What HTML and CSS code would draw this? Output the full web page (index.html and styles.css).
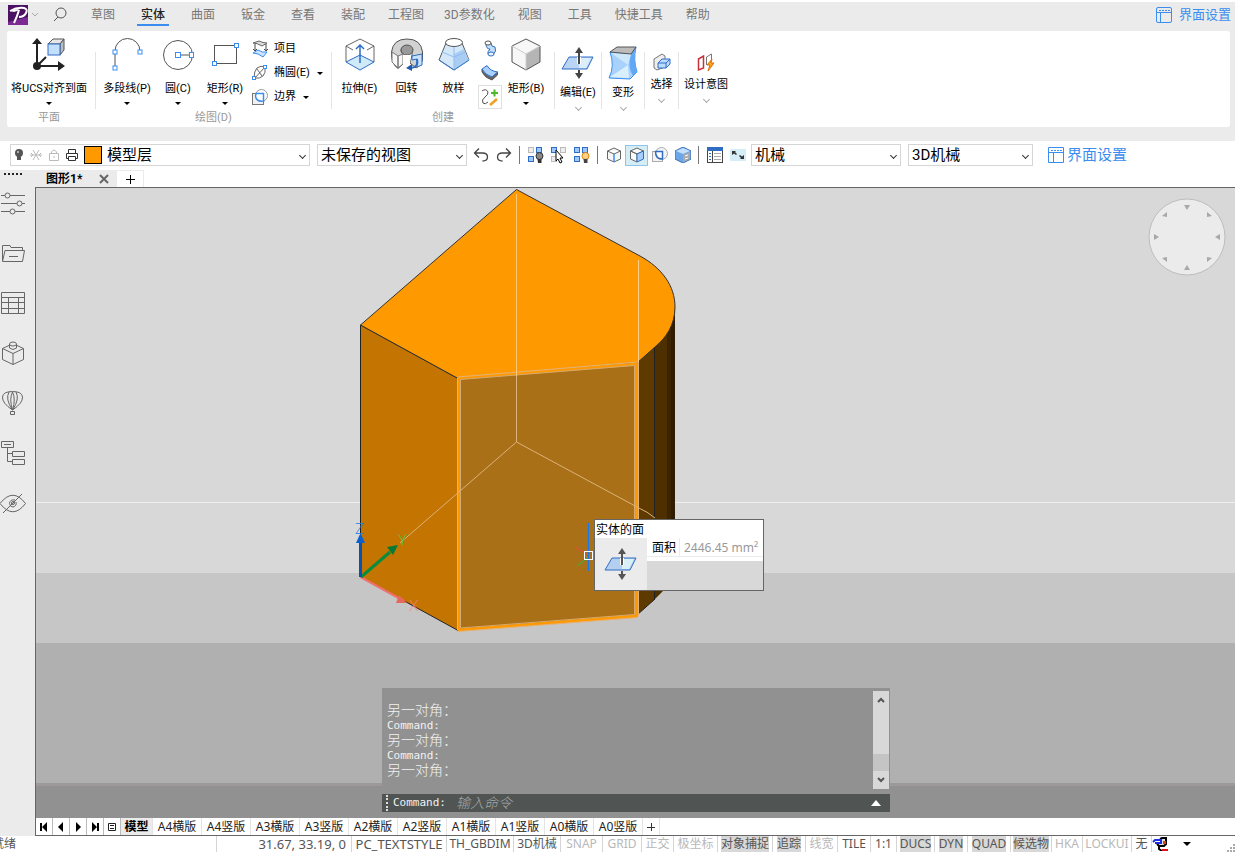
FILE: index.html
```
<!DOCTYPE html>
<html lang="zh-CN">
<head>
    <meta charset="UTF-8">
    <meta name="viewport" content="width=device-width, initial-scale=1.0">
    <title>图形1</title>
    <link rel="stylesheet" href="styles.css">
</head>
<body>

<!-- Menu bar -->
<header class="menubar">
    <button class="logo" aria-label="应用菜单">
        <svg width="20" height="20" viewBox="0 0 20 20"><rect width="20" height="20" fill="#4b1263"/><path d="M0 17 L20 12 V20 H0Z" fill="#7a2a92"/><path d="M2 6 Q9 2 16 3 Q20 4 18 8 Q16 12 11 12 M11 5 Q9 12 6 18" fill="none" stroke="#fff" stroke-width="2"/><path d="M2 6 L9 4 L12 5 L6 7Z" fill="#fff"/></svg>
        <svg width="8" height="6" viewBox="0 0 8 6"><path d="M1 1 L4 4 L7 1" fill="none" stroke="#aaa"/></svg>
    </button>
    <button class="search" aria-label="搜索">
        <svg width="14" height="16" viewBox="0 0 14 16"><circle cx="8" cy="6" r="5" fill="none" stroke="#555"/><path d="M5 10 L1 14" stroke="#555" fill="none"/></svg>
    </button>
    <nav class="tabs">
        <a href="#">草图</a>
        <a href="#" class="active">实体</a>
        <a href="#">曲面</a>
        <a href="#">钣金</a>
        <a href="#">查看</a>
        <a href="#">装配</a>
        <a href="#">工程图</a>
        <a href="#">3D参数化</a>
        <a href="#">视图</a>
        <a href="#">工具</a>
        <a href="#">快捷工具</a>
        <a href="#">帮助</a>
    </nav>
    <a href="#" class="settings">
        <svg width="16" height="16" viewBox="0 0 16 16"><path d="M.5 2 Q.5 .5 2 .5 H14 Q15.500 .5 15.500 2 V14 Q15.500 15.500 14 15.500 H2 Q.5 15.500 .5 14Z M.5 5.500 H15.500 M4.500 5.500 V15.500" fill="none" stroke="#3b8ef0"/><path d="M3 3.500 H14" stroke="#3b8ef0" stroke-dasharray="2 1"/></svg>
        <span>界面设置</span>
    </a>
</header>

<!-- Ribbon -->
<section class="ribbon">
    <div class="panel">
        <div class="group plane">
            <div class="tools">
                <button class="tool">
                    <svg width="34" height="36" viewBox="0 0 34 36"><path d="M5 29 V5 M5 29 L14 20 M5 29 H27" stroke="#222" stroke-width="2" fill="none"/><circle cx="5" cy="29" r="4" fill="#222"/><path d="M0 7 L5 1 L10 7Z M26 24 L33 29 L26 34Z" fill="#222"/><path d="M16 7 L21 2 H32 L28 7Z" fill="#e6e6e6" stroke="#555"/><path d="M28 7 L32 2 V13 L28 18Z" fill="#bdbdbd" stroke="#555"/><rect x="16" y="7" width="12" height="11" fill="#c4e0ff" stroke="#2f6dc4"/></svg>
                    <span>将UCS对齐到面</span>
                    <i class="caret"></i>
                </button>
            </div>
            <div class="caption">平面</div>
        </div>

        <div class="group">
            <div class="tools">
                <button class="tool w54">
                    <svg width="34" height="36" viewBox="0 0 34 36"><path d="M5 30 V14 A12.500 12.500 0 0 1 30 14" fill="none" stroke="#555"/><g fill="#fff" stroke="#3b8ef0"><rect x="3" y="13" width="4" height="4"/><rect x="28" y="13" width="4" height="4"/><rect x="3" y="29" width="4" height="4"/></g></svg>
                    <span>多段线(P)</span>
                    <i class="caret"></i>
                </button>
                <button class="tool w48">
                    <svg width="34" height="36" viewBox="0 0 34 36"><circle cx="17" cy="18" r="14.500" fill="none" stroke="#555"/><path d="M17 18 H31" stroke="#555"/><g fill="#fff" stroke="#3b8ef0"><rect x="14.500" y="15.500" width="5" height="5"/><rect x="28.500" y="15.500" width="4" height="5"/></g></svg>
                    <span>圆(C)</span>
                    <i class="caret"></i>
                </button>
                <button class="tool w46">
                    <svg width="34" height="36" viewBox="0 0 34 36"><rect x="6.500" y="8.500" width="22" height="18" fill="none" stroke="#555"/><g fill="#fff" stroke="#3b8ef0"><rect x="26.500" y="6.500" width="4" height="4"/><rect x="4.500" y="24.500" width="4" height="4"/></g></svg>
                    <span>矩形(R)</span>
                    <i class="caret"></i>
                </button>
                <div class="stack">
                    <button>
                        <svg width="16" height="18" viewBox="0 0 16 18"><path d="M1 3 L7 1 Q11 3 15 3 L10 6 Q5 3 1 3Z" fill="#ddd" stroke="#666"/><path d="M3 4 V11 M14 4 V11 M1 9 L3 11 L5 9 M12 9 L14 11 L16 9" fill="none" stroke="#444"/><path d="M1 13 L6 10 Q10 13 15 12 L11 17 Q6 13 1 13Z" fill="#cfe5ff" stroke="#3b8ef0"/></svg>
                        <span>项目</span>
                    </button>
                    <button>
                        <svg width="16" height="18" viewBox="0 0 16 18"><path d="M2 14 Q2 7 5 4 Q9 1 13 3 Q14 9 11 12 Q8 15 2 14Z M2 15 L13 3 M5 5 L10 12" fill="none" stroke="#666"/><g fill="#fff" stroke="#3b8ef0"><rect x="11.500" y="1.500" width="3" height="3"/><rect x=".5" y="12.500" width="3" height="3"/></g></svg>
                        <span>椭圆(E)</span>
                        <i class="caret"></i>
                    </button>
                    <button>
                        <svg width="16" height="18" viewBox="0 0 16 18"><rect x=".5" y="5.500" width="11" height="11" fill="#f2f2f2" stroke="#777"/><circle cx="9.500" cy="7.500" r="6" fill="none" stroke="#9a9a9a"/><path d="M4 5.500 H11.500 V13 Q4 14 3.500 8Z" fill="#fff" stroke="#3b8ef0" stroke-width="1.500"/></svg>
                        <span>边界</span>
                        <i class="caret"></i>
                    </button>
                </div>
            </div>
            <div class="caption">绘图(D)</div>
        </div>

        <div class="group">
            <div class="tools">
                <button class="tool w47">
                    <svg width="34" height="36" viewBox="0 0 34 36"><path d="M3 25 L17 18 L31 25 L17 33Z" fill="#cfeaf8" stroke="#2f6dc4"/><path d="M3 25 V9 L17 2 L31 9 V25 M3 9 L10 13 M31 9 L24 13" fill="none" stroke="#666"/><path d="M17 26 V9 M13 12 L17 8 L21 12" fill="none" stroke="#2f6dc4" stroke-width="1.500"/></svg>
                    <span>拉伸(E)</span>
                </button>
                <button class="tool w47">
                    <svg width="34" height="36" viewBox="0 0 34 36"><path d="M1.500 15 Q3 2 17 2 Q31 2 32.500 15 V22 Q32 28 26 31 L20 26 L22 18 Q23 9 17 9 Q11 9 11 14 L13 18 V27 L8 31.500 Q1 27 1.500 15Z" fill="#d2d2d2" stroke="#555"/><ellipse cx="17" cy="13" rx="6" ry="5" fill="#9a9a9a" stroke="#555"/><path d="M2 15 L8 19 V31 L2 25Z M8 19 L13 17 V27 L8 31Z" fill="#f8f8f8" stroke="#777"/><path d="M13 18 L21 18 L20 26 L13 27Z" fill="#fff"/><path d="M22 19 L32 17 V28 L27 30 V22 L22 23Z" fill="#cae1fb" stroke="#2f6dc4"/><path d="M27 22 Q29 30 21 31" fill="none" stroke="#2f6dc4" stroke-width="2"/><path d="M16 31 L22 27 V34Z" fill="#2459a8"/></svg>
                    <span>回转</span>
                </button>
                <button class="tool w47">
                    <svg width="34" height="36" viewBox="0 0 34 36"><path d="M9 6 L2 23 L17 33 L32 23 L25 6Z" fill="#d5e8fa" stroke="#555"/><path d="M17 17 V33 L32 23 L27 12Z" fill="#a9cdf2"/><ellipse cx="17" cy="5.500" rx="8.500" ry="4" fill="#fff" stroke="#555"/><path d="M5 15 L17 20 L29 15 M17 10 V33" fill="none" stroke="#8fbdf0"/><path d="M2 23 L17 33 L32 23" fill="none" stroke="#3b7fd6"/></svg>
                    <span>放样</span>
                </button>
                <div class="mini">
                    <button aria-label="扫掠">
                        <svg width="16" height="18" viewBox="0 0 16 18"><path d="M4 4 Q4 9 8 9 Q5 12 6 14 L11 15 Q15 11 13 7 Q9 7 9 3Z" fill="#c4def8" stroke="#2f6dc4"/><ellipse cx="6" cy="3" rx="3" ry="2" fill="#fff" stroke="#555"/><ellipse cx="9" cy="14" rx="3" ry="2" fill="#e8f2fc" stroke="#2f6dc4"/></svg>
                    </button>
                    <button aria-label="加厚">
                        <svg width="18" height="18" viewBox="0 0 18 18"><path d="M1 5 V8 Q4 14 11 16 L16.500 11 V8 L11 13 Q4 11 1 5Z" fill="#666" stroke="#555"/><path d="M1 5 L6 1.500 Q9 7 16.500 8 L11 13 Q4 11 1 5Z" fill="#a9d0fa" stroke="#2f6dc4"/></svg>
                    </button>
                    <button class="framed" aria-label="螺旋">
                        <svg width="20" height="20" viewBox="0 0 20 20"><path d="M2 4 Q6 1 8 5 Q8 8 5 10 Q1 13 3 16 Q5 18 8 15" fill="none" stroke="#555"/><path d="M11 6 H18 M14.500 2.500 V9.500" stroke="#4db82b" stroke-width="2"/><path d="M10 18 L17 12" stroke="#f59d22" stroke-width="2.500"/></svg>
                    </button>
                </div>
                <button class="tool w48">
                    <svg width="34" height="36" viewBox="0 0 34 36"><path d="M3 9 L17 2 L31 9 V25 L17 33 L3 25Z" fill="#f7f7f7"/><path d="M17 17 L31 9 V25 L17 33Z" fill="#b5b5b5"/><path d="M3 9 L17 2 L31 9 V25 L17 33 L3 25Z" fill="none" stroke="#555"/><path d="M3 9 L17 17 L31 9 M17 17 V33" fill="none" stroke="#ccc"/></svg>
                    <span>矩形(B)</span>
                    <i class="caret"></i>
                </button>
            </div>
            <div class="caption">创建</div>
        </div>

        <div class="group single">
            <button class="tool w46">
                <svg width="34" height="36" viewBox="0 0 34 36"><path d="M8 12 H32 L26 24 H1Z" fill="#b9d4f5" stroke="#2f6dc4"/><path d="M18 13 H30 L25 23 H18Z" fill="#dceefa"/><path d="M18 12 V19" stroke="#fff" stroke-width="4"/><path d="M18 6 V19 M18 25 V31" stroke="#444" stroke-width="2"/><path d="M14 8 L18 2 L22 8Z M14 28 L18 34 L22 28Z" fill="#444"/></svg>
                <span>编辑(E)</span>
                <i class="chevron"></i>
            </button>
        </div>
        <div class="group single">
            <button class="tool w42">
                <svg width="34" height="36" viewBox="0 0 34 36"><path d="M4 7 Q9 21 3 33 L24 34 L31 27 Q27 15 30 2 L25 9Z" fill="#a8d2fb" stroke="#3b8ef0"/><path d="M25 9 L30 2 Q27 15 31 27 L27 31 Q21 22 25 9Z" fill="#62a8f7"/><path d="M5 8 L22 20 L25 9Z" fill="#cde8fa"/><path d="M22 20 L4 32 L23 33Z" fill="#d9effc"/><path d="M4 7 L11 2 H30 L25 9Z" fill="#bcbcbc" stroke="#555"/></svg>
                <span>变形</span>
                <i class="chevron"></i>
            </button>
        </div>
        <div class="group single">
            <button class="tool small w32">
                <svg width="18" height="20" viewBox="0 0 18 20"><path d="M1 6 L9 1 L12 3 V14 L4 17 L1 15Z" fill="#eee" stroke="#777"/><path d="M5 10 L9 6 H17 V11 L13 15 H5Z" fill="#bcdcff" stroke="#2f6dc4"/><path d="M5 10 H13 L17 6 M13 10 V15" fill="none" stroke="#2f6dc4"/></svg>
                <span>选择</span>
                <i class="chevron"></i>
            </button>
        </div>
        <div class="group single">
            <button class="tool small w54">
                <svg width="18" height="20" viewBox="0 0 18 20"><path d="M1.500 6 L6.500 3 V15 L1.500 17Z" fill="#fff" stroke="#c9303a" stroke-width="1.500"/><path d="M9.500 12 V4 L14.500 1 V7" fill="none" stroke="#777"/><path d="M15 6 L10 12 H13 L11 18 L17 10 H14Z" fill="#f7a81b" stroke="#e36c0a"/></svg>
                <span>设计意图</span>
                <i class="chevron"></i>
            </button>
        </div>
    </div>
</section>

<!-- Quick toolbar -->
<section class="toolbar">
    <div class="combo layer">
        <svg width="10" height="14" viewBox="0 0 10 14"><circle cx="5" cy="5" r="4" fill="#555"/><path d="M3 8 H7 V12 H3Z" fill="#555"/><circle cx="4" cy="4" r="1" fill="#ccc"/></svg>
        <svg width="12" height="12" viewBox="0 0 12 12"><path d="M0 6 H12 M3 1 L9 11 M9 1 L3 11 M1 4 L3 6 L1 8 M11 4 L9 6 L11 8" stroke="#bbb" fill="none"/></svg>
        <svg width="12" height="12" viewBox="0 0 12 12"><path d="M1.500 4.500 H10.500 V11.500 H1.500Z M3.500 4.500 V3 Q6 -1 8.500 3 V4.500 M6 7 V9" fill="none" stroke="#bbb"/></svg>
        <svg width="12" height="12" viewBox="0 0 12 12"><path d="M2.500 4 V.5 H9.500 V4 M2 9.500 H.5 V4.500 H11.500 V9.500 H10 M2.500 7.500 H9.500 V11.500 H2.500Z" fill="none" stroke="#333"/></svg>
        <span class="swatch"></span>
        <select aria-label="图层"><option>模型层</option></select>
        <i class="arrow"></i>
    </div>
    <div class="combo view">
        <select aria-label="视图"><option>未保存的视图</option></select>
        <i class="arrow"></i>
    </div>
    <div class="actions">
        <button aria-label="撤销"><svg width="16" height="16" viewBox="0 0 16 16"><path d="M6 1.500 L1.500 6 L6 10.500 M1.500 6 H9.500 Q14.500 6 14.500 10 Q14.500 14 9.500 14" fill="none" stroke="#444" stroke-width="1.300"/></svg></button>
        <button aria-label="重做"><svg width="16" height="16" viewBox="0 0 16 16"><path d="M10 1.500 L14.500 6 L10 10.500 M14.500 6 H6.500 Q1.500 6 1.500 10 Q1.500 14 6.500 14" fill="none" stroke="#444" stroke-width="1.300"/></svg></button>
        <span class="bar"></span>
        <button aria-label="隔离"><svg width="18" height="18" viewBox="0 0 18 18"><rect x="1.500" y="1.500" width="5" height="5" stroke="#bbb" fill="#eee"/><rect x="9.500" y="1.500" width="5" height="5" stroke="#2f6dc4" fill="#9cc8ff"/><rect x="1.500" y="10.500" width="5" height="5" stroke="#2f6dc4" fill="#9cc8ff"/><circle cx="12.500" cy="10" r="3.500" fill="#888" stroke="#333"/><path d="M10.500 13 H14.500 V17 H11Z" fill="#333"/></svg></button>
        <button aria-label="选择实体"><svg width="18" height="18" viewBox="0 0 18 18"><rect x="1.500" y="1.500" width="5" height="5" stroke="#2f6dc4" fill="#9cc8ff"/><g fill="#eee" stroke="#bbb"><rect x="10.500" y="1.500" width="5" height="5"/><rect x="1.500" y="10.500" width="5" height="5"/></g><path d="M6 4 V15 L8 13 L10 17 L12 16 L10 12 H13Z" fill="#fff" stroke="#000"/></svg></button>
        <button aria-label="取消隔离"><svg width="18" height="18" viewBox="0 0 18 18"><g fill="#9cc8ff" stroke="#2f6dc4"><rect x="1.500" y="1.500" width="5" height="5"/><rect x="9.500" y="1.500" width="5" height="5"/><rect x="1.500" y="10.500" width="5" height="5"/></g><circle cx="12.500" cy="10" r="3.500" fill="#ffd28a" stroke="#d98510"/><path d="M10.500 13 H14.500 V17 H11Z" fill="#444"/></svg></button>
        <span class="bar"></span>
        <button aria-label="线框"><svg width="16" height="16" viewBox="0 0 16 16"><path d="M1.500 4 L8 1 L14.500 4 V12 L8 15 L1.500 12Z M1.500 4 L8 7 L14.500 4" fill="#f6f6f6" stroke="#666"/><path d="M8 7 V15" stroke="#3b8ef0" stroke-width="1.500"/></svg></button>
        <button class="on" aria-label="着色"><svg width="16" height="16" viewBox="0 0 16 16"><path d="M1.500 4 L8 1 L14.500 4 L8 7Z M1.500 4 V12 L8 15 V7Z" fill="#fafafa" stroke="#666"/><path d="M8 7 L14.500 4 V12 L8 15Z" fill="#a8cffc" stroke="#2f6dc4"/></svg></button>
        <button aria-label="边界"><svg width="16" height="16" viewBox="0 0 16 16"><rect x=".5" y="4.500" width="10" height="10" fill="#f4f4f4" stroke="#aaa"/><circle cx="9.500" cy="6.500" r="6" fill="#f4f4f4" stroke="#aaa"/><path d="M3.500 4.500 H10.500 V12 Q3.500 12 3.500 4.500Z" fill="#fff" stroke="#2f6dc4" stroke-width="1.500"/></svg></button>
        <button aria-label="实体"><svg width="16" height="16" viewBox="0 0 16 16"><path d="M0 4 L8 0 L16 4 V12 L8 16 L0 12Z" fill="#6da6e8" stroke="#3b70b5"/><path d="M1 4 L8 1 L15 4 L8 7Z" fill="#c4dffb"/><path d="M8 8 L15 5 V12 L8 15Z" fill="#aaa"/><path d="M10 9 L13 8 M10 12 L13 11" stroke="#fff"/></svg></button>
        <span class="bar"></span>
        <button aria-label="面板"><svg width="16" height="16" viewBox="0 0 16 16"><rect x=".5" y=".5" width="15" height="15" fill="#fff" stroke="#444"/><rect width="16" height="4" fill="#2f6dc4"/><path d="M5.500 4 V15" stroke="#444"/><path d="M2 6.500 H4 M2 9.500 H4 M2 12.500 H4" stroke="#2f6dc4"/><path d="M7 6.500 H14 M7 9.500 H14 M7 12.500 H14" stroke="#aaa"/></svg></button>
        <button aria-label="缩放"><svg width="16" height="12" viewBox="0 0 16 12"><rect width="16" height="12" fill="#d5eef6"/><path d="M2 2 H6 L5 3 L7 5 L6 6 L4 4.500 L2 6Z M14 10 H10 L11 9 L9 7 L10 6 L12 7.500 L14 6Z" fill="#333"/></svg></button>
    </div>
    <div class="combo ui">
        <select aria-label="界面"><option>机械</option></select>
        <i class="arrow"></i>
    </div>
    <div class="combo space">
        <select aria-label="工作空间"><option>3D机械</option></select>
        <i class="arrow"></i>
    </div>
    <a href="#" class="settings large">
        <svg width="16" height="16" viewBox="0 0 16 16"><path d="M.5 .5 H15.500 V15.500 H.5Z M.5 5.500 H15.500 M5.500 5.500 V15.500" fill="none" stroke="#3b8ef0"/><path d="M3 3.500 H14" stroke="#3b8ef0" stroke-dasharray="2 1"/></svg>
        <span>界面设置</span>
    </a>
</section>

<main class="workspace">
    <aside class="sidebar">
        <div class="grip"></div>
        <button aria-label="特性"><svg width="26" height="26" viewBox="0 0 26 26"><path d="M1 5.500 H25 M1 13.500 H25 M1 21.500 H25"/><g fill="#ebebeb"><circle cx="7.500" cy="5.500" r="2.500"/><circle cx="19.500" cy="13.500" r="2.500"/><circle cx="12.500" cy="21.500" r="2.500"/></g></svg></button>
        <button aria-label="文件"><svg width="26" height="26" viewBox="0 0 26 26"><path d="M2.500 21 V5.500 H10 L11 7.500 H22.500 V10.500 M5 10.500 H24.500 L22.500 21.500 H2.500Z M9 16.500 H18"/></svg></button>
        <button aria-label="表格"><svg width="26" height="26" viewBox="0 0 26 26"><path d="M1.500 2.500 H24.500 V23.500 H1.500Z M1.500 7.500 H24.500 M1.500 12.500 H24.500 M1.500 18.500 H24.500 M8.500 7.500 V23.500 M18.500 7.500 V23.500"/></svg></button>
        <button aria-label="零件"><svg width="26" height="26" viewBox="0 0 26 26"><path d="M10 5 L2.500 8.500 V19.500 L13 24.500 L23.500 19.500 V8.500 L16 5 M2.500 8.500 L13 13.500 L23.500 8.500 M13 13.500 V24.500 M9.500 4 V8 Q13 11 16.500 8 V4"/><ellipse cx="13" cy="4" rx="3.500" ry="2"/></svg></button>
        <button aria-label="渲染"><svg width="26" height="26" viewBox="0 0 26 26"><path d="M12.500 20 Q2 13 2.500 7 Q3 1.500 12.500 1.500 Q22 1.500 22.500 7 Q23 13 12.500 20 Q5 9 9 2 M12.500 20 Q20 9 16 2 M12.500 20 Q9 9 12.500 2 Q16 9 12.500 20 M10.500 21.500 H14.500 V24.500 H10.500Z"/></svg></button>
        <button aria-label="结构"><svg width="26" height="26" viewBox="0 0 26 26"><path d="M1.500 1.500 H13.500 V7.500 H1.500Z M4 4.500 H11 M7.500 7.500 V21.500 H12 M7.500 13.500 H12 M12.500 11.500 H24.500 V16.500 H12.500Z M12.500 19.500 H24.500 V24.500 H12.500Z"/></svg></button>
        <button aria-label="隐藏"><svg width="26" height="26" viewBox="0 0 26 26"><path d="M0 13.500 Q13 -3 25.500 13.500 Q13 30 0 13.500Z M3 23 L22 4 M15 10 Q10 9 9.500 13.500 Q10 17 13 17 Q17 16 16 12"/><circle cx="13" cy="13" r="1.500"/></svg></button>
    </aside>

    <div class="document">
        <div class="doctabs">
            <div class="doctab">
                <span>图形1*</span>
                <button aria-label="关闭"><svg width="10" height="10" viewBox="0 0 10 10"><path d="M1 1 L9 9 M9 1 L1 9" stroke="#666" stroke-width="2"/></svg></button>
            </div>
            <button class="newtab" aria-label="新建"><svg width="9" height="9" viewBox="0 0 9 9"><path d="M0 4.500 H9 M4.500 0 V9" stroke="#000"/></svg></button>
        </div>

        <div class="canvas">
            <svg class="scene" viewBox="36 188 1199 630" preserveAspectRatio="xMidYMid slice">
                <rect x="36" y="188" width="1199" height="385" fill="#d8d8d8"/>
                <rect x="36" y="573" width="1199" height="70" fill="#c6c6c6"/>
                <rect x="36" y="643" width="1199" height="140" fill="#b0b0b0"/>
                <rect x="36" y="783" width="1199" height="3" fill="#9d9999"/>
                <rect x="36" y="786" width="1199" height="32" fill="#919191"/>
                <path d="M36 502.500 H1235" stroke="#efefef"/>

                <!-- solid body -->
                <path d="M637 340 H655 V599 L637 615Z" fill="#5f3a00"/>
                <path d="M655 330 H667 V587 L655 599Z" fill="#4d2f00"/>
                <path d="M667 320 H671 V578 L667 587Z" fill="#3c2400"/>
                <path d="M671 307 H675 V560 L671 578Z" fill="#301c00"/>
                <path d="M654.500 345 V600" stroke="#222"/>
                <path d="M655 599 L637 615" stroke="#222"/>
                <path d="M360.500 325 L459 379 V631 L360.500 577Z" fill="#c47400" stroke="#222"/>
                <path d="M516.500 189.500 L640 256 C662 268 675 286 675 307 C675 325 666 338 655 347 L637 363 L459 379 L360.500 325Z" fill="#ff9900" stroke="#333"/>
                <path d="M459 378 L636.500 364 V616 L459 630Z" fill="#a97017" stroke="#ff9900" stroke-width="3"/>
                <path d="M460.500 379.500 L634.500 365.500 V614.500 L460.500 628Z" fill="none" stroke="#d6a970"/>
                <path d="M457.500 377 L638.500 362 V616 M457.500 378 V630 M458 631.500 L638 617.500" fill="none" stroke="#e2b27c"/>
                <path d="M638.500 260 V362" stroke="#ffcf8d"/>
                <path d="M516.500 194 V376" stroke="#ffc67a"/>
                <path d="M516.500 376 V442 L637 507 Q648 512 655 518 M516.500 442 L400 543" fill="none" stroke="#dcb27a"/>

                <!-- ucs axes -->
                <path d="M360.500 577 L404 601" stroke="#f07070" stroke-width="2"/>
                <path d="M399 595 L407 603 L396 603Z" fill="#e66a5c"/>
                <path d="M361 577 L390 552" stroke="#0a8c3c" stroke-width="3"/>
                <path d="M387 547 L398 545 L393 555Z" fill="#087a34"/>
                <path d="M360.500 577 V541" stroke="#0a50b0" stroke-width="3"/>
                <path d="M356 543 L360.500 533 L365 543Z" fill="#0a60d0"/>
                <g class="axis">
                    <text x="355" y="534" fill="#2580e8">Z</text>
                    <text x="398" y="545" fill="#2fd050">Y</text>
                    <text x="409" y="611" fill="#ff8080">X</text>
                </g>

                <!-- crosshair -->
                <path d="M575 547 L590 556" stroke="#f04848"/>
                <path d="M577 566 L590 556" stroke="#20c050"/>
                <path d="M588.500 523 V571" stroke="#1479f0"/>
                <rect x="584.500" y="551.500" width="8" height="8" fill="none" stroke="#fff"/>
            </svg>

            <div class="lookfrom">
                <svg width="80" height="80" viewBox="0 0 80 80"><circle cx="40" cy="40" r="38" fill="#ebebeb" stroke="#bdbdbd"/><g fill="#a8a8a8"><path d="M37 8 H43 L40 13Z"/><path d="M37 73 H43 L40 68Z"/><path d="M7 37 V43 L12 40Z"/><path d="M73 37 V43 L68 40Z"/><path d="M15 19 L20 15 V20Z"/><path d="M65 19 L60 15 V20Z"/><path d="M15 61 L20 65 V60Z"/><path d="M65 61 L60 65 V60Z"/></g></svg>
            </div>

            <div class="rollover">
                <div class="rollover-title">实体的面</div>
                <div class="rollover-body">
                    <div class="rollover-icon">
                        <svg width="34" height="36" viewBox="0 0 34 36"><path d="M8 12 H32 L26 24 H1Z" fill="#b5cff0" stroke="#2f6dc4"/><path d="M18 13 H30 L25 23 H18Z" fill="#d8f0f6"/><path d="M18 12 V19" stroke="#fff" stroke-width="4"/><path d="M18 6 V19 M18 25 V31" stroke="#555" stroke-width="2"/><path d="M14 8 L18 2 L22 8Z M14 28 L18 34 L22 28Z" fill="#555"/></svg>
                    </div>
                    <dl>
                        <dt>面积</dt>
                        <dd>2446.45 mm²</dd>
                    </dl>
                </div>
            </div>

            <div class="command">
                <div class="history">
                    <div class="lines">
                        <p>另一对角：</p>
                        <p>Command:</p>
                        <p>另一对角：</p>
                        <p>Command:</p>
                        <p>另一对角：</p>
                    </div>
                    <div class="scroll">
                        <button aria-label="向上"><svg width="8" height="6" viewBox="0 0 8 6"><path d="M1 5 L4 2 L7 5" fill="none" stroke="#555" stroke-width="2"/></svg></button>
                        <span class="thumb"></span>
                        <button aria-label="向下"><svg width="8" height="6" viewBox="0 0 8 6"><path d="M1 1 L4 4 L7 1" fill="none" stroke="#555" stroke-width="2"/></svg></button>
                    </div>
                </div>
                <div class="prompt">
                    <label for="cmd">Command:</label>
                    <input type="text" id="cmd" placeholder="输入命令">
                    <button aria-label="展开"><svg width="10" height="6" viewBox="0 0 10 6"><path d="M0 6 L5 0 L10 6Z" fill="#fff"/></svg></button>
                </div>
            </div>
        </div>

        <div class="layouts">
            <button class="nav" aria-label="首个"><svg width="10" height="10" viewBox="0 0 10 10"><path d="M1 1 H3 V9 H1Z M8 0 V10 L3 5Z"/></svg></button>
            <button class="nav" aria-label="上一个"><svg width="10" height="10" viewBox="0 0 10 10"><path d="M7 0 V10 L2 5Z"/></svg></button>
            <button class="nav" aria-label="下一个"><svg width="10" height="10" viewBox="0 0 10 10"><path d="M3 0 V10 L8 5Z"/></svg></button>
            <button class="nav" aria-label="末个"><svg width="10" height="10" viewBox="0 0 10 10"><path d="M2 0 V10 L7 5Z M7 1 H9 V9 H7Z"/></svg></button>
            <button class="nav" aria-label="列表"><svg width="8" height="8" viewBox="0 0 8 8"><path d="M.5 .5 H7.500 V7.500 H.5Z M2 2.500 H6 M2 5.500 H6" fill="none" stroke="#222"/></svg></button>
            <button class="layout active">模型</button>
            <button class="layout">A4横版</button>
            <button class="layout">A4竖版</button>
            <button class="layout">A3横版</button>
            <button class="layout">A3竖版</button>
            <button class="layout">A2横版</button>
            <button class="layout">A2竖版</button>
            <button class="layout">A1横版</button>
            <button class="layout">A1竖版</button>
            <button class="layout">A0横版</button>
            <button class="layout">A0竖版</button>
            <button class="nav" aria-label="添加布局"><svg width="8" height="8" viewBox="0 0 8 8"><path d="M0 4.500 H8 M4.500 0 V8" stroke="#333"/></svg></button>
        </div>
    </div>
</main>

<!-- Status bar -->
<footer class="status">
    <span class="ready">就绪</span>
    <span class="coords">31.67, 33.19, 0</span>
    <button class="style">PC_TEXTSTYLE</button>
    <button>TH_GBDIM</button>
    <button>3D机械</button>
    <button class="off">SNAP</button>
    <button class="off">GRID</button>
    <button class="off">正交</button>
    <button class="off">极坐标</button>
    <button class="on"><b>对象捕捉</b></button>
    <button class="on"><b>追踪</b></button>
    <button class="off">线宽</button>
    <button>TILE</button>
    <button>1:1</button>
    <button class="on"><b>DUCS</b></button>
    <button class="on"><b>DYN</b></button>
    <button class="on"><b>QUAD</b></button>
    <button class="on"><b>候选物</b></button>
    <button class="off">HKA</button>
    <button class="off">LOCKUI</button>
    <button>无</button>
    <span class="tray">
        <svg width="17" height="14" viewBox="0 0 17 14"><path d="M8 2 L10 1 H14 V7 L12 9 H7 L5 7" fill="#ddd" stroke="#000" stroke-width="2"/><path d="M7 8 V12 L10 14" fill="none" stroke="#000" stroke-width="2"/><path d="M1 5 L3 3 H9 V6 H3" fill="#fff" stroke="#1c2ee0" stroke-width="2"/><path d="M10 13 H16" stroke="#e01010" stroke-width="2"/><rect x="11" y="4" width="3" height="3" fill="#e04010"/></svg>
        <i class="caret"></i>
        <svg class="grip-corner" width="8" height="8" viewBox="0 0 8 8"><path d="M6 0 H8 V2 H6Z M3 3 H5 V5 H3Z M6 3 H8 V5 H6Z M0 6 H2 V8 H0Z M3 6 H5 V8 H3Z M6 6 H8 V8 H6Z" fill="#aaa"/></svg>
    </span>
</footer>

</body>
</html>
```
FILE: styles.css
```
* {
    box-sizing: border-box;
}
body {
    margin: 0;
    height: 100vh;
    display: flex;
    flex-direction: column;
    overflow: hidden;
    background: #fff;
    color: #222;
    font-family: Roboto, "Noto Sans CJK SC", sans-serif;
    font-size: 12px;
    line-height: 16px;
}
button {
    font: inherit;
    color: inherit;
    background: none;
    border: 0;
    padding: 0;
    display: flex;
    align-items: center;
    justify-content: center;
    white-space: nowrap;
    cursor: pointer;
}
a {
    color: inherit;
    text-decoration: none;
}
svg {
    flex: none;
    display: block;
}
.caret {
    flex: none;
    border: 3px solid transparent;
    border-top-color: #000;
    border-bottom: 0;
}
.chevron,
.arrow {
    flex: none;
    width: 5px;
    height: 5px;
    border: solid #aaa;
    border-width: 0 1px 1px 0;
    transform: rotate(45deg);
}

/* menu bar */
.menubar {
    display: flex;
    align-items: center;
    height: 31px;
    padding: 0 4px 4px 8px;
    background: #ebebeb;
    border-top: 2px solid #fff;
}
.logo {
    gap: 3px;
}
.search {
    width: 14px;
    margin: 0 11px 0 14px;
}
.tabs {
    display: flex;
}
.tabs a {
    position: relative;
    min-width: 50px;
    padding: 4px 10px 3px;
    text-align: center;
    color: #777;
    white-space: nowrap;
}
.tabs .active {
    color: #222;
    font-weight: 500;
}
.tabs .active::after {
    content: "";
    display: block;
    position: absolute;
    left: 9px;
    right: 9px;
    bottom: 0;
    height: 2px;
    background: #3b8ef0;
}
.settings {
    display: flex;
    align-items: center;
    gap: 7px;
    margin-left: auto;
    color: #3b8ef0;
    font-size: 13px;
    white-space: nowrap;
}
.settings.large {
    gap: 3px;
    margin-left: 15px;
    font-size: 15px;
}

/* ribbon */
.ribbon {
    padding: 0 5px 14px 7px;
    background: #ebebeb;
    font-size: 11px;
}
.panel {
    display: flex;
    height: 96px;
    background: #fff;
    border-radius: 3px;
}
.group {
    position: relative;
    padding: 6px 4px 0;
    border-right: 1px solid transparent;
    border-image: linear-gradient(transparent 22px, #e4e4e4 22px, #e4e4e4 77px, transparent 77px) 1;
}
.group.plane {
    padding: 6px 4px 0 0;
}
.group.single {
    padding: 14px 0 0;
}
.group:last-child {
    border-image: none;
}
.tools {
    display: flex;
    height: 73px;
}
.tool {
    flex-direction: column;
    justify-content: flex-start;
    align-self: flex-start;
    width: 84px;
    color: #000;
}
.tool span {
    margin-top: 8px;
}
.tool .caret {
    margin-top: 5px;
}
.tool .chevron {
    margin-top: 4px;
}
.single .tool span {
    margin-top: 4px;
}
.tool.small {
    padding-top: 8px;
}
.w32 { width: 33px; }
.w42 { width: 42px; }
.w46 { width: 46px; }
.w47 { width: 47px; }
.w48 { width: 48px; }
.w54 { width: 54px; }
.caption {
    text-align: center;
    color: #999;
}
.stack {
    display: flex;
    flex-direction: column;
    width: 79px;
    padding-left: 4px;
    color: #000;
}
.stack button {
    justify-content: flex-start;
    gap: 6px;
    height: 24px;
}
.stack .caret {
    margin-left: 1px;
}
.mini {
    display: flex;
    flex-direction: column;
    align-items: center;
    width: 25px;
}
.mini button {
    width: 24px;
    height: 24px;
}
.mini .framed {
    border: 1px solid #e0e0e0;
}

/* toolbar */
.toolbar {
    display: flex;
    align-items: center;
    height: 29px;
    padding: 0 0 1px 10px;
}
.combo {
    display: flex;
    align-items: center;
    height: 22px;
    padding-right: 4px;
    border: 1px solid #d5d5d5;
    font-size: 15px;
}
.combo select {
    flex: 1;
    min-width: 0;
    height: 20px;
    padding: 0 0 0 3px;
    appearance: none;
    border: 0;
    background: none;
    color: #000;
    font: inherit;
    line-height: 20px;
}
.combo .arrow {
    border-color: #333;
}
.combo.layer {
    width: 300px;
    margin-right: 7px;
    padding-left: 3px;
    gap: 6px;
}
.combo.layer select {
    margin-left: -4px;
}
.combo.view {
    width: 150px;
}
.combo.ui {
    width: 150px;
    margin-right: 7px;
}
.combo.space {
    width: 125px;
}
.swatch {
    width: 18px;
    height: 18px;
    background: #ff9900;
    border: 1px solid #000;
}
.actions {
    display: flex;
    align-items: center;
    padding: 0 2px;
}
.actions button {
    width: 23px;
    height: 21px;
}
.actions .on {
    background: #d5eef6;
    border: 1px solid #8cc6ea;
}
.bar {
    width: 1px;
    height: 18px;
    margin: 0 4px;
    background: #777;
}

/* workspace */
.workspace {
    flex: 1;
    display: flex;
    min-height: 0;
}
.sidebar {
    width: 35px;
    background: #ebebeb;
}
.sidebar button {
    width: 26px;
    height: 50px;
}
.sidebar svg {
    fill: none;
    stroke: #666;
}
.grip {
    width: 18px;
    height: 8px;
    margin-left: 4px;
    background: repeating-linear-gradient(90deg, #222 0 2px, transparent 2px 4px) 0 3px / 18px 2px no-repeat;
}
.document {
    flex: 1;
    display: flex;
    flex-direction: column;
    min-width: 0;
}
.doctabs {
    display: flex;
    height: 17px;
}
.doctab {
    display: flex;
    align-items: center;
    justify-content: space-between;
    width: 82px;
    padding: 0 8px 0 11px;
    background: #ebebeb;
    color: #000;
    font-weight: bold;
    white-space: nowrap;
}
.newtab {
    width: 27px;
    border: solid #ebebeb;
    border-width: 1px 1px 0 0;
}
.canvas {
    position: relative;
    flex: 1;
    min-height: 0;
    overflow: hidden;
    border: solid #666;
    border-width: 1px 0 0 1px;
}
.scene {
    width: 100%;
    height: 100%;
}
.axis {
    font-family: Lato, sans-serif;
    font-size: 15px;
    font-weight: 300;
}
.lookfrom {
    position: absolute;
    top: 9px;
    right: 8px;
}
.rollover {
    position: absolute;
    left: 558px;
    top: 331px;
    width: 170px;
    border: 1px solid #666;
    background: #fff;
    color: #000;
}
.rollover-title {
    height: 18px;
    padding: 0 1px;
    line-height: 20px;
}
.rollover-body {
    display: flex;
    background: #d8d8d8;
}
.rollover-icon {
    display: flex;
    align-items: center;
    justify-content: center;
    width: 52px;
    height: 52px;
    background: #ebebeb;
}
.rollover dl {
    flex: 1;
    display: flex;
    align-self: flex-start;
    height: 23px;
    margin: 0;
    background: #fff;
    border-bottom: 4px solid #fff;
    box-shadow: inset 0 -1px #ebebeb;
    line-height: 20px;
    white-space: nowrap;
}
.rollover dt {
    width: 33px;
    padding-left: 5px;
    border-right: 1px solid #ebebeb;
}
.rollover dd {
    margin: 0;
    padding-left: 4px;
    color: #999;
    font-family: "Noto Sans", sans-serif;
}

/* command line */
.command {
    position: absolute;
    left: 346px;
    bottom: 6px;
    width: 508px;
    color: #f2f2f2;
    font-family: "DejaVu Sans Mono", "Noto Sans CJK SC", monospace;
    font-size: 11px;
}
.history {
    display: flex;
    justify-content: space-between;
    height: 106px;
    padding: 3px 1px 5px 5px;
    background: #919191;
}
.lines {
    padding-top: 12px;
}
.lines p {
    height: 15px;
    margin: 0;
    line-height: 15px;
}
.lines p:nth-child(odd) {
    font-size: 14px;
    font-weight: 300;
}
.scroll {
    display: flex;
    flex-direction: column;
    width: 16px;
    background: #d8d8d8;
}
.scroll button {
    height: 18px;
}
.thumb {
    height: 17px;
    margin-top: auto;
    background: #c4c4c4;
}
.prompt {
    display: flex;
    align-items: center;
    height: 18px;
    padding: 0 9px 0 4px;
    background: #505554;
}
.prompt label {
    padding-left: 5px;
    border-left: 2px dotted #ddd;
}
.prompt input {
    flex: 1;
    min-width: 0;
    height: 18px;
    padding: 0 10px;
    border: 0;
    outline: 0;
    background: none;
    color: #fff;
    font-family: inherit;
    font-size: 14px;
}
.prompt input::placeholder {
    color: #aaa;
    font-style: italic;
    font-weight: 300;
}

/* layout tabs */
.layouts {
    display: flex;
    height: 18px;
    border: solid #666;
    border-width: 0 0 1px 1px;
    background: #fff;
    font-family: "Noto Sans", "Noto Sans CJK SC", sans-serif;
}
.layouts .nav {
    width: 17px;
    border-right: 1px solid #bbb;
}
.layouts .nav:last-child {
    border-color: #e4e4e4;
}
.layout {
    width: 49px;
    border-right: 1px solid #e4e4e4;
}
.layout.active {
    width: 32px;
    background: #ebebeb;
    color: #000;
    font-weight: bold;
}

/* status bar */
.status {
    display: grid;
    grid-template-columns: 217px 135px 95px 67px 47px 42px 39px 32px 44px 55px 33px 32px 33px 26px 38px 33px 43px 41px 31px 49px 20px 1fr;
    height: 16px;
    color: #555;
    font-family: "Noto Sans", "Noto Sans CJK SC", sans-serif;
}
.status > * {
    border-right: 1px solid #d5d5d5;
    white-space: nowrap;
}
.status .ready {
    text-indent: -8px;
}
.status .coords {
    padding-right: 5px;
    text-align: right;
}
.status .coords,
.status .style {
    font-size: 13px;
}
.status .off {
    color: #b8b8b8;
}
.status b {
    background: #d8d8d8;
    font-weight: normal;
}
.status .tray {
    display: flex;
    align-items: center;
    gap: 14px;
    border: 0;
}
.tray .caret {
    border-width: 4px;
    border-bottom: 0;
}
.grip-corner {
    align-self: flex-end;
    margin-left: auto;
}
```
